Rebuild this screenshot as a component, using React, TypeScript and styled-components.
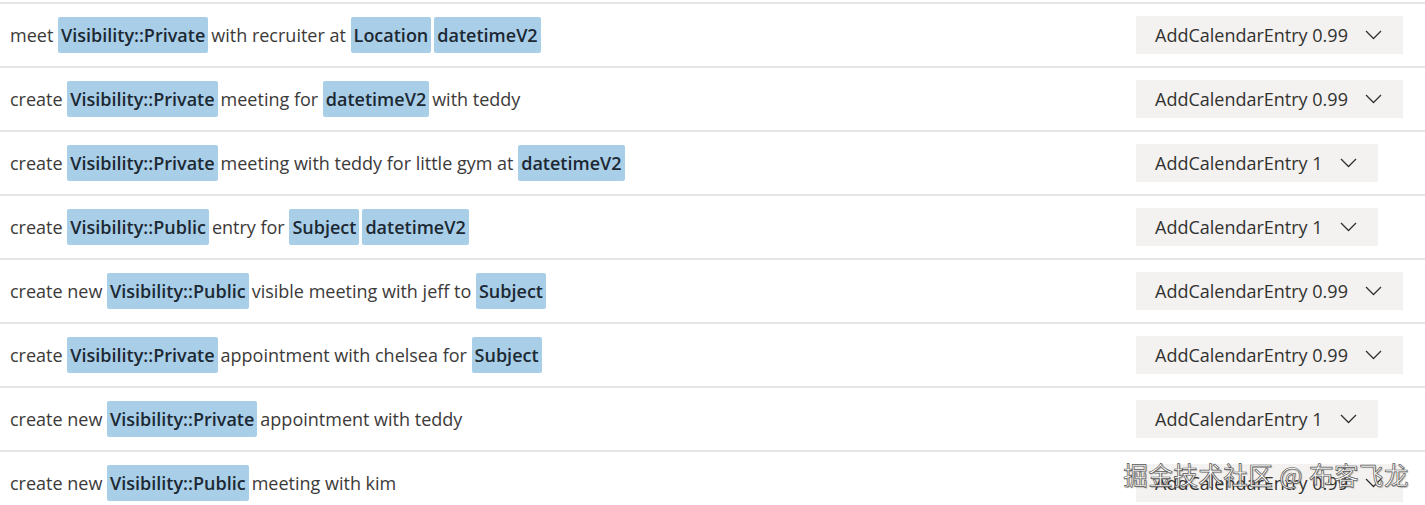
import React from "react";
import styled, { createGlobalStyle } from "styled-components";

const Global = createGlobalStyle`
  html, body { margin: 0; padding: 0; background: #ffffff; }
  body { font-family: "Open Sans", "Noto Sans", sans-serif; }
`;

const Page = styled.div`
  position: relative;
  width: 1425px;
  height: 505px;
  overflow: hidden;
  padding-top: 2px;
  box-sizing: border-box;
  background: #fff;
`;

const Row = styled.div`
  display: grid;
  grid-template-columns: 1fr 289px;
  align-items: center;
  height: 62px;
  border-top: 2px solid #e6e5e4;
`;

const Utterance = styled.div`
  display: flex;
  align-items: center;
  padding-left: 10px;
  font-size: 18px;
  color: #3b3a39;
  white-space: pre;
`;

const Plain = styled.span``;

const Chip = styled.span`
  display: inline-flex;
  align-items: center;
  height: 36px;
  padding: 0 3px;
  margin-right: 3px;
  background: #a9cfe8;
  border-radius: 2px;
  font-weight: 600;
  color: #1c2833;
`;

const Dropdown = styled.div`
  justify-self: start;
  display: inline-flex;
  align-items: center;
  gap: 17px;
  height: 38px;
  padding: 0 21px 0 19px;
  background: #f3f2f1;
  font-size: 18px;
  color: #323130;
`;

const Chevron = () => (
  <svg width="17" height="10" viewBox="0 0 17 10" fill="none">
    <polyline points="1,1 8.5,8.5 16,1" stroke="#323130" strokeWidth="1.3" />
  </svg>
);

const Watermark = styled.div`
  position: absolute;
  right: 16px;
  bottom: 13px;
  font-family: "Noto Sans CJK SC", sans-serif;
  font-size: 24.5px;
  color: #ffffff;
  letter-spacing: 0.5px;
  -webkit-text-stroke: 0.7px #555555;
  text-shadow: 1px 1px 1px rgba(0,0,0,0.3);
`;

type Part = { t: string; chip?: boolean };

const rows: { parts: Part[]; intent: string }[] = [
  {
    parts: [
      { t: "meet " },
      { t: "Visibility::Private", chip: true },
      { t: "with recruiter at " },
      { t: "Location", chip: true },
      { t: "datetimeV2", chip: true },
    ],
    intent: "AddCalendarEntry 0.99",
  },
  {
    parts: [
      { t: "create " },
      { t: "Visibility::Private", chip: true },
      { t: "meeting for " },
      { t: "datetimeV2", chip: true },
      { t: "with teddy" },
    ],
    intent: "AddCalendarEntry 0.99",
  },
  {
    parts: [
      { t: "create " },
      { t: "Visibility::Private", chip: true },
      { t: "meeting with teddy for little gym at " },
      { t: "datetimeV2", chip: true },
    ],
    intent: "AddCalendarEntry 1",
  },
  {
    parts: [
      { t: "create " },
      { t: "Visibility::Public", chip: true },
      { t: "entry for " },
      { t: "Subject", chip: true },
      { t: "datetimeV2", chip: true },
    ],
    intent: "AddCalendarEntry 1",
  },
  {
    parts: [
      { t: "create new " },
      { t: "Visibility::Public", chip: true },
      { t: "visible meeting with jeff to " },
      { t: "Subject", chip: true },
    ],
    intent: "AddCalendarEntry 0.99",
  },
  {
    parts: [
      { t: "create " },
      { t: "Visibility::Private", chip: true },
      { t: "appointment with chelsea for " },
      { t: "Subject", chip: true },
    ],
    intent: "AddCalendarEntry 0.99",
  },
  {
    parts: [
      { t: "create new " },
      { t: "Visibility::Private", chip: true },
      { t: "appointment with teddy" },
    ],
    intent: "AddCalendarEntry 1",
  },
  {
    parts: [
      { t: "create new " },
      { t: "Visibility::Public", chip: true },
      { t: "meeting with kim" },
    ],
    intent: "AddCalendarEntry 0.99",
  },
];

export default function App() {
  return (
    <Page>
      <Global />
      {rows.map((r, i) => (
        <Row key={i}>
          <Utterance>
            {r.parts.map((p, j) =>
              p.chip ? <Chip key={j}>{p.t}</Chip> : <Plain key={j}>{p.t}</Plain>
            )}
          </Utterance>
          <Dropdown>
            <span>{r.intent}</span>
            <Chevron />
          </Dropdown>
        </Row>
      ))}
      <Watermark>掘金技术社区 @ 布客飞龙</Watermark>
    </Page>
  );
}
